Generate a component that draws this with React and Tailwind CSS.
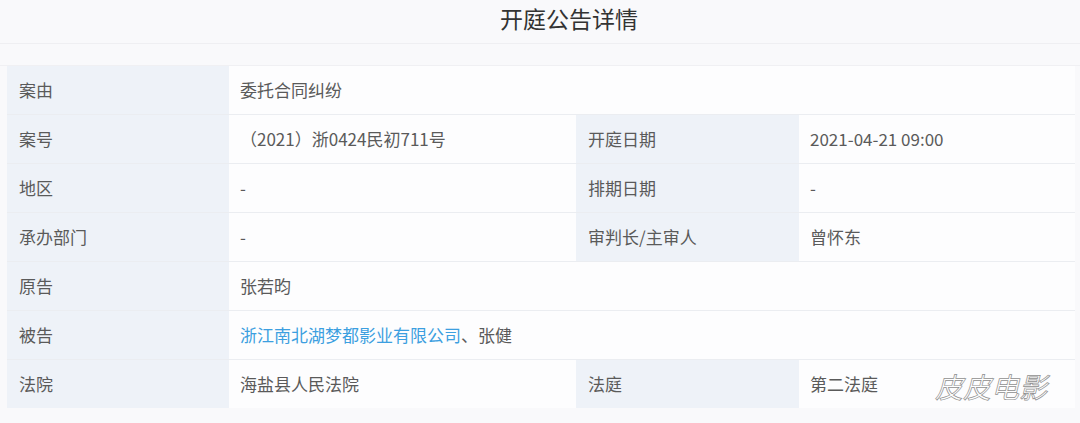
import React from "react";

const rows = [
  [["案由", "委托合同纠纷"]],
  [["案号", "（2021）浙0424民初711号"], ["开庭日期", "2021-04-21 09:00"]],
  [["地区", "-"], ["排期日期", "-"]],
  [["承办部门", "-"], ["审判长/主审人", "曾怀东"]],
  [["原告", "张若昀"]],
  [["被告", "defendant"]],
  [["法院", "海盐县人民法院"], ["法庭", "第二法庭"]],
];

function Cell({ label, value, wide, second }) {
  return (
    <>
      <div className={"flex items-center px-3 bg-[#eef2f8] " + (second ? "w-[223px]" : "w-[222px]")}>
        {label}
      </div>
      <div className={"flex items-center px-[11px] bg-[#fdfdfe] " + (wide || second ? "flex-1" : "w-[347px]")}>
        {value === "defendant" ? (
          <span>
            <span className="text-[#3c9fe0]">浙江南北湖梦都影业有限公司</span>、张健
          </span>
        ) : (
          value
        )}
      </div>
    </>
  );
}

export default function App() {
  return (
    <div
      className="relative w-[1080px] h-[423px] bg-[#f9f9fb] overflow-hidden text-[#5a5a5a] text-[17px]"
      style={{ fontFamily: '"Noto Sans CJK SC", "Noto Sans", sans-serif' }}
    >
      <div className="h-[44px] flex items-center justify-center border-b border-[#efeff2] text-[23px] text-[#333] pl-[58px] pb-[6px]">
        开庭公告详情
      </div>
      <div className="h-[22px] border-b border-[#f0f0f3]" />

      <div className="ml-[7px] mr-[5px] flex flex-col gap-px bg-[#ebedf1]">
        {rows.map((r, i) => (
          <div key={i} className="flex h-[48px]">
            <Cell label={r[0][0]} value={r[0][1]} wide={r.length === 1} />
            {r[1] && <Cell label={r[1][0]} value={r[1][1]} second />}
          </div>
        ))}
      </div>

      <div className="absolute left-[935px] top-[365px] text-[28px] italic text-white [-webkit-text-stroke:0.7px_#8f8f8f]">
        皮皮电影
      </div>
    </div>
  );
}
